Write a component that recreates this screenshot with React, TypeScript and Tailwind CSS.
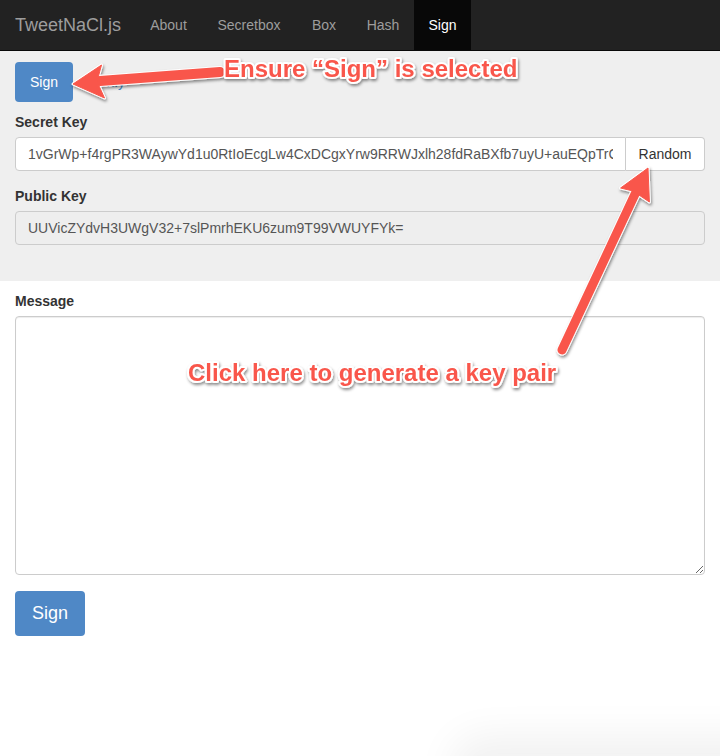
import React from "react";

const SECRET =
  "1vGrWp+f4rgPR3WAywYd1u0RtIoEcgLw4CxDCgxYrw9RRWJxlh28fdRaBXfb7uyU+auEQpTrCq7cvYZjVPjLb6M2t0Ld";
const PUBLIC = "UUVicZYdvH3UWgV32+7slPmrhEKU6zum9T99VWUYFYk=";

const RED = "#f9574b";

function Overlay() {
  return (
    <svg
      className="absolute left-0 top-0 pointer-events-none"
      width={720}
      height={756}
      viewBox="0 0 720 756"
    >
      <defs>
        <filter id="sh" x="-20%" y="-20%" width="140%" height="140%">
          <feDropShadow dx="1" dy="2" stdDeviation="1.6" floodColor="#000" floodOpacity="0.45" />
        </filter>
      </defs>
      {/* Arrow 1 */}
      <g filter="url(#sh)">
        <line x1="220" y1="72" x2="100" y2="81" stroke="#fff" strokeWidth="12" strokeLinecap="round" />
        <polygon points="73,84 101.5,65 97,81.5 104.5,98" fill="#fff" stroke="#fff" strokeWidth="3" strokeLinejoin="round" />
        <line x1="220" y1="72" x2="100" y2="81" stroke={RED} strokeWidth="10" strokeLinecap="round" />
        <polygon points="73,84 101.5,65 97,81.5 104.5,98" fill={RED} stroke={RED} strokeWidth="1" strokeLinejoin="round" />
      </g>
      {/* Arrow 2 */}
      <g filter="url(#sh)">
        <line x1="562" y1="350" x2="636" y2="192" stroke="#fff" strokeWidth="11" strokeLinecap="round" />
        <polygon points="648,168 620.6,188 633,191 649.4,202" fill="#fff" stroke="#fff" strokeWidth="3" strokeLinejoin="round" />
        <line x1="562" y1="350" x2="636" y2="192" stroke={RED} strokeWidth="9" strokeLinecap="round" />
        <polygon points="648,168 620.6,188 633,191 649.4,202" fill={RED} stroke={RED} strokeWidth="1" strokeLinejoin="round" />
      </g>
      <g filter="url(#sh)">
        <text
          x="224"
          y="77"
          fontFamily="'Liberation Sans', Arial, sans-serif"
          fontWeight="bold"
          fontSize="24"
          fill={RED}
          stroke="#fff"
          strokeWidth="4"
          strokeLinejoin="round"
          paintOrder="stroke"
        >
          Ensure “Sign” is selected
        </text>
        <text
          x="188"
          y="381"
          fontFamily="'Liberation Sans', Arial, sans-serif"
          fontWeight="bold"
          fontSize="24"
          fill={RED}
          stroke="#fff"
          strokeWidth="4"
          strokeLinejoin="round"
          paintOrder="stroke"
        >
          Click here to generate a key pair
        </text>
      </g>
    </svg>
  );
}

export default function App() {
  return (
    <div className="relative w-[720px] h-[756px] overflow-hidden bg-white font-['Liberation_Sans',Arial,sans-serif] text-[14px] text-[#333]">
      {/* Navbar */}
      <nav className="flex h-[51px] bg-[#222] border-b border-[#080808]">
        <div className="w-[135px] pl-[15px] text-[18px] leading-[50px] text-[#9d9d9d]">TweetNaCl.js</div>
        <ul className="flex">
          <li className="w-[67px] text-center leading-[50px] text-[#9d9d9d]">About</li>
          <li className="w-[94px] text-center leading-[50px] text-[#9d9d9d]">Secretbox</li>
          <li className="w-[56px] text-center leading-[50px] text-[#9d9d9d]">Box</li>
          <li className="w-[62px] text-center leading-[50px] text-[#9d9d9d]">Hash</li>
          <li className="w-[57px] text-center leading-[50px] bg-[#080808] text-white">Sign</li>
        </ul>
      </nav>

      {/* Grey section */}
      <section className="bg-[#efefef] px-[15px] pt-[11px] pb-[36px]">
        <ul className="flex mb-[10px]">
          <li className="h-[40px] px-[15px] leading-[40px] rounded-[4px] bg-[#4f88c6] text-white">Sign</li>
          <li className="ml-[2px] h-[40px] px-[15px] leading-[40px] text-[#428bca]">Verify</li>
        </ul>
        <label className="block font-bold leading-[20px] mb-[5px]">Secret Key</label>
        <div className="flex h-[34px] mb-[15px]">
          <input
            readOnly
            value={SECRET}
            className="flex-1 min-w-0 h-[34px] px-[12px] bg-white border border-[#ccc] rounded-l-[4px] text-[#555] text-[14px] outline-none"
          />
          <button className="h-[34px] w-[79px] border border-l-0 border-[#ccc] rounded-r-[4px] bg-white text-[#333] text-[14px]">
            Random
          </button>
        </div>
        <label className="block font-bold leading-[20px] mb-[5px]">Public Key</label>
        <input
          readOnly
          value={PUBLIC}
          className="block w-full h-[34px] px-[12px] bg-[#eee] border border-[#ccc] rounded-[4px] text-[#555] text-[14px] outline-none"
        />
      </section>

      {/* White section */}
      <section className="px-[15px] pt-[10px]">
        <label className="block font-bold leading-[20px] mb-[5px]">Message</label>
        <textarea className="block w-full h-[259px] border border-[#ccc] rounded-[4px] bg-white shadow-[inset_0_1px_1px_rgba(0,0,0,0.075)] outline-none resize-y mb-[16px]" />
        <button className="flex items-center justify-center w-[70px] h-[45px] rounded-[4px] bg-[#4f88c6] text-white text-[18px]">
          Sign
        </button>
      </section>

      {/* faint window shadow at bottom right */}
      <div className="absolute left-[470px] top-[754px] w-[300px] h-[40px] rounded-[12px] bg-[#f4f4f4] shadow-[0_0_40px_18px_rgba(0,0,0,0.06)]" />

      <Overlay />
    </div>
  );
}
